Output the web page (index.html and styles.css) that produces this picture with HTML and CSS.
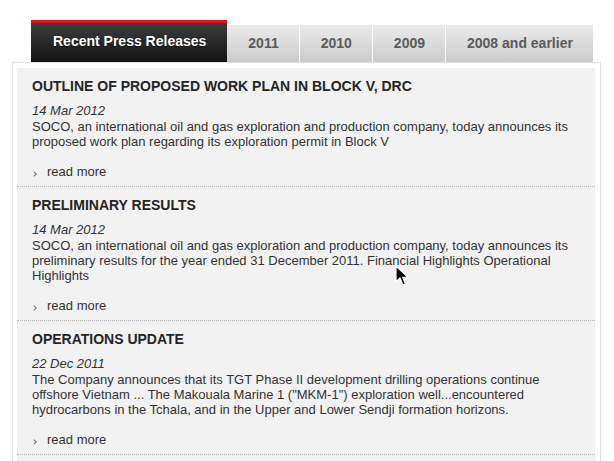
FILE: index.html
```html
<!DOCTYPE html>
<html>
<head>
<meta charset="utf-8">
<link rel="stylesheet" href="styles.css">
</head>
<body>
<div class="page">
  <div class="tabs">
    <div class="tab active">Recent Press Releases</div>
    <div class="tab">2011</div>
    <div class="tab">2010</div>
    <div class="tab">2009</div>
    <div class="tab">2008 and earlier</div>
  </div>
  <div class="panel">
    <div class="item">
      <h3 class="title">OUTLINE OF PROPOSED WORK PLAN IN BLOCK V, DRC</h3>
      <div class="date">14 Mar 2012</div>
      <p class="text">SOCO, an international oil and gas exploration and production company, today announces its proposed work plan regarding its exploration permit in Block V</p>
      <a class="more" href="#">read more</a>
    </div>
    <div class="item">
      <h3 class="title">PRELIMINARY RESULTS</h3>
      <div class="date">14 Mar 2012</div>
      <p class="text">SOCO, an international oil and gas exploration and production company, today announces its preliminary results for the year ended 31 December 2011. Financial Highlights Operational Highlights</p>
      <a class="more" href="#">read more</a>
    </div>
    <div class="item">
      <h3 class="title">OPERATIONS UPDATE</h3>
      <div class="date">22 Dec 2011</div>
      <p class="text">The Company announces that its TGT Phase II development drilling operations continue offshore Vietnam ... The Makouala Marine 1 ("MKM-1") exploration well...encountered hydrocarbons in the Tchala, and in the Upper and Lower Sendji formation horizons.</p>
      <a class="more" href="#">read more</a>
    </div>
    <div class="item item-empty"></div>
  </div>
  <svg class="cursor" width="14" height="22" viewBox="0 0 14 22">
    <path d="M1 1 L1 17 L5 13 L8 20 L10.5 19 L7.6 12.3 L13 12.3 Z" fill="#000" stroke="#fff" stroke-width="1.2" stroke-linejoin="round"/>
  </svg>
</div>
</body>
</html>
```
FILE: styles.css
```css
html, body {
  margin: 0;
  padding: 0;
  background: #fff;
  height: 100%;
  overflow: hidden;
}
body {
  font-family: "Liberation Sans", Arial, Helvetica, sans-serif;
  color: #333;
}
.page {
  position: relative;
  padding: 20px 0 0 12px;
}
.tabs {
  display: flex;
  align-items: flex-end;
  margin-left: 19px;
  height: 42px;
}
.tab {
  height: 37px;
  line-height: 37px;
  padding: 0 20px 0 21px;
  font-size: 14px;
  font-weight: bold;
  color: #5b5b5b;
  background: linear-gradient(#eaeaea, #cbcbcb);
  border-left: 1px solid #fff;
  box-sizing: content-box;
}
.tab:nth-child(2) { border-left: 0; }
.tab.active {
  height: 39px;
  line-height: 36px;
  padding: 0 21px 0 22px;
  color: #fff;
  border-left: 0;
  border-top: 3px solid #e3101c;
  background: linear-gradient(#3c3d3e, #131313);
  text-shadow: 0 1px 1px rgba(0,0,0,0.6);
}
.panel {
  width: 589px;
  box-sizing: border-box;
  border: 1px solid #e1e1e1;
  border-bottom: 0;
  padding: 5px 5px 0 4px;
}
.item {
  background: #f2f2f2;
  padding: 9px 15px 7px;
  border-bottom: 1px dotted #b5b5b5;
}
.item-empty {
  height: 30px;
  padding: 0;
  border-bottom: 0;
}
.title {
  margin: 0 0 8px;
  font-size: 14px;
  line-height: 18px;
  font-weight: bold;
  color: #252525;
}
.date {
  font-size: 13px;
  line-height: 16px;
  font-style: italic;
  color: #333;
}
.text {
  margin: 0 0 15px;
  font-size: 13px;
  line-height: 15px;
  color: #333;
}
.more {
  display: block;
  position: relative;
  padding-left: 15px;
  font-size: 13px;
  line-height: 15px;
  color: #333;
  text-decoration: none;
}
.more::before {
  content: "";
  position: absolute;
  left: 0;
  top: 8px;
  width: 3px;
  height: 3px;
  border-right: 1px solid #777;
  border-top: 1px solid #777;
  transform: rotate(45deg);
}
.cursor {
  position: absolute;
  left: 395px;
  top: 265px;
}
```
